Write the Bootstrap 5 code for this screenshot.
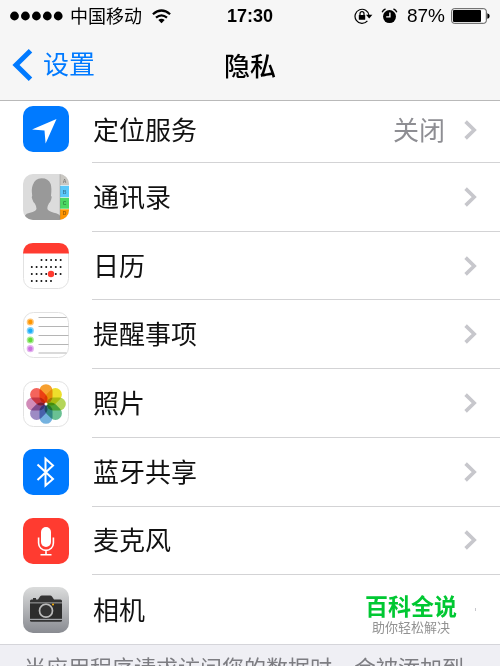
<!DOCTYPE html>
<html lang="zh-CN">
<head>
<meta charset="utf-8">
<meta name="viewport" content="width=device-width, initial-scale=1">
<title>隐私</title>
<link href="https://cdn.jsdelivr.net/npm/bootstrap@5.3.0/dist/css/bootstrap.min.css" rel="stylesheet">
<style>
body{font-family:"Liberation Sans","Noto Sans CJK SC",sans-serif;background:#efeff4;color:#111;overflow:hidden}
svg{display:block;flex:none}
.top-area{background:#f6f6f6;border-bottom:1px solid #b9b9b9}
.status{height:32px;padding:0 10px;color:#000}
.status-side{flex:1 1 0}
.carrier{font-size:18px;line-height:24px;padding-top:2px;margin-left:7px;margin-right:10px}
.clock{font-size:18px;line-height:24px}
.charge{font-size:19px;line-height:24px;margin:0 6px 0 9px}
.titlebar{height:68px;padding:2px 12px 0}
.back{font-size:26px;line-height:36px;color:#007aff;gap:9px}
.page-title{font-size:26px;line-height:36px;font-weight:500;color:#000}
.settings{background:#fff;border-bottom:1px solid #d5d5da}
.setting{min-height:68px;flex:1 1 0;padding-left:23px;color:#111;background:#fff}
.setting.first{flex:0 0 62px;min-height:62px}
.setting.first .tile{margin-bottom:7px}
.setting.first .setting-body{padding-bottom:4px}
.setting-body{margin-left:23px;padding-right:23px;border-bottom:1px solid #d3d3d5;font-size:26px;line-height:36px}
.setting-name{padding:2px 0 0 1px}
.state{color:#8e8e93;margin-right:19px;padding-top:2px}
.setting:last-child .setting-body{border-bottom:0}
.brand{line-height:24px;font-size:23px;color:#00c832;margin-right:18px;padding-top:12px}
.brand-sub{font-size:13px;line-height:18px;color:#929292}
.speck{width:1px;height:3px;background:#c7c7cc;margin-right:1px}
.note{height:21px;padding:8px 24px 0;font-size:22px;line-height:32px;color:#7d7d82}
</style>
<script src="https://cdn.jsdelivr.net/npm/bootstrap@5.3.0/dist/js/bootstrap.bundle.min.js"></script>
</head>
<body class="d-flex flex-column vh-100">
<svg width="0" height="0" class="position-absolute" aria-hidden="true">
  <symbol id="chev" viewBox="0 0 13 20"><path d="M1.6 1.6 10.2 10 1.6 18.4" fill="none" stroke="#c7c7cc" stroke-width="3.6"/></symbol>
</svg>
<header class="top-area">
  <div class="status d-flex align-items-center">
    <div class="status-side d-flex align-items-center">
      <svg width="53" height="10" viewBox="0 0 53 10"><g fill="#000"><circle cx="4.5" cy="5" r="4.4"/><circle cx="15.4" cy="5" r="4.4"/><circle cx="26.4" cy="5" r="4.4"/><circle cx="37.3" cy="5" r="4.4"/><circle cx="48.2" cy="5" r="4.4"/></g></svg>
      <span class="carrier">中国移动</span>
      <svg width="19" height="15" viewBox="0 0 19 15"><g fill="none" stroke="#000" stroke-width="2.2"><path d="M.9 5.3Q9.500-2.300 18.100 5.300"/><path d="M4 8.700Q9.500 4 15 8.700"/></g><path d="M6.300 11.100Q9.500 8.600 12.700 11.100L9.500 14.200Z"/></svg>
    </div>
    <span class="clock fw-bold">17:30</span>
    <div class="status-side d-flex align-items-center justify-content-end">
      <svg width="19" height="16" viewBox="0 0 19 16"><path d="M13.400 12.800A7 7 0 1 1 15 7.500" fill="none" stroke="#000" stroke-width="1.200"/><path d="M12 6.800h6.400L15.200 10.400Z"/><rect x="4.800" y="7" width="6.400" height="4.800" rx=".5"/><path d="M6 7.300V5.700a2 2 0 0 1 4 0v1.600" fill="none" stroke="#000" stroke-width="1.200"/></svg>
      <svg class="ms-2" width="17" height="16" viewBox="0 0 17 16"><circle cx="8.500" cy="8.600" r="6.500"/><path d="M8.900 4.500v4.400H5.200" fill="none" stroke="#f6f6f6" stroke-width="1.400"/><path d="M1.200 4.300Q2 1.800 4.500 1M15.800 4.300Q15 1.800 12.500 1" fill="none" stroke="#000" stroke-width="1.400"/></svg>
      <span class="charge">87%</span>
      <svg width="39" height="16" viewBox="0 0 39 16"><rect x=".7" y=".7" width="34.600" height="14.600" rx="2.500" fill="#fff" stroke="#555" stroke-width="1"/><rect x="2" y="2" width="28" height="12" rx="1"/><path d="M36.300 5.200q2.400.4 2.400 2.800t-2.400 2.800Z"/></svg>
    </div>
  </div>
  <nav class="titlebar d-flex align-items-center">
    <div class="status-side"><a href="#" class="back d-inline-flex align-items-center text-decoration-none"><svg width="22" height="32" viewBox="0 0 22 32"><path d="M18.500 1.800 4 16l14.500 14.200" fill="none" stroke="#007aff" stroke-width="5"/></svg>设置</a></div>
    <h1 class="page-title m-0">隐私</h1>
    <div class="status-side"></div>
  </nav>
</header>

<main class="settings d-flex flex-column flex-grow-1">
  <a href="#" class="setting first d-flex align-items-center text-decoration-none">
    <svg class="tile" width="46" height="46" viewBox="0 0 46 46"><rect width="46" height="46" rx="10" fill="#007aff"/><path d="M33.500 13 22.600 37.500 21.500 24.500 9 23.600Z" fill="#fff"/></svg>
    <div class="setting-body flex-grow-1 align-self-stretch d-flex align-items-center"><span class="setting-name me-auto">定位服务</span><span class="state">关闭</span><svg width="13" height="20"><use href="#chev"/></svg></div>
  </a>
  <a href="#" class="setting d-flex align-items-center text-decoration-none">
    <svg width="46" height="46" viewBox="0 0 46 46"><defs><clipPath id="tileClip"><rect width="46" height="46" rx="10"/></clipPath></defs><g clip-path="url(#tileClip)"><rect width="46" height="46" fill="#dcdcdc"/><path d="M2 46v-4.500q1-2 5-2.800 6.200-1.500 6.500-4 .2-2-1.700-5.200-1.500-1-2.300-3.800-1.400-3-.3-4-1-7 .5-10.500Q12 4.300 18.500 4.300q7 0 9.200 5.600 1.200 4 .3 11.800 1.400.8.200 3.800-.9 3-2.200 3.800-1.700 3-1.700 5 .2 3 6.500 4.400 5 1 6.200 3V46Z" fill="#999"/><path d="M37 0h9v11.500h-9Z" fill="#c9c7c2"/><path d="M37 11.500h9v12h-9Z" fill="#5ac8fa"/><path d="M37 23.500h9v11.500h-9Z" fill="#4cd964"/><path d="M37 35h9v11h-9Z" fill="#ff9500"/><path d="M37 11.500h9M37 23.500h9M37 35h9" stroke="#fff" stroke-opacity=".6"/><path d="M37 0v46" stroke="#777" stroke-opacity=".35"/><g fill="#000" fill-opacity=".4" font-family="Liberation Sans" font-size="5" font-weight="bold" text-anchor="middle"><text x="41.500" y="9">A</text><text x="41.500" y="19.500">B</text><text x="41.500" y="31">C</text><text x="41.500" y="41">D</text></g></g></svg>
    <div class="setting-body flex-grow-1 align-self-stretch d-flex align-items-center"><span class="setting-name me-auto">通讯录</span><svg width="13" height="20"><use href="#chev"/></svg></div>
  </a>
  <a href="#" class="setting d-flex align-items-center text-decoration-none">
    <svg width="46" height="46" viewBox="0 0 46 46"><rect x=".5" y=".5" width="45" height="45" rx="10" fill="#fff" stroke="#e2e2e2"/><path d="M0 10.500Q.5 0 10 0h26q9.500 0 10 10.500Z" fill="#ff3b30"/><g stroke="#111" stroke-width="2" stroke-linecap="round" stroke-dasharray="0 4.800"><path d="M18.500 17h19.500M8.800 24h29.300M8.800 31h29.300M8.800 38h19.500"/></g><circle cx="28" cy="31" r="3.200" fill="#ff3b30"/></svg>
    <div class="setting-body flex-grow-1 align-self-stretch d-flex align-items-center"><span class="setting-name me-auto">日历</span><svg width="13" height="20"><use href="#chev"/></svg></div>
  </a>
  <a href="#" class="setting d-flex align-items-center text-decoration-none">
    <svg width="46" height="46" viewBox="0 0 46 46"><rect x=".5" y=".5" width="45" height="45" rx="10" fill="#fff" stroke="#e2e2e2"/><path d="M15.500 5.500h28M15.500 14.500h30M15.500 23.500h30M15.500 32.500h30M15.500 41h28" stroke="#b5b5b5"/><g fill-opacity=".55"><circle cx="7.300" cy="10" r="3.600" fill="#ff9500"/><circle cx="7.300" cy="18.700" r="3.600" fill="#1badf8"/><circle cx="7.300" cy="28" r="3.600" fill="#63da38"/><circle cx="7.300" cy="36.700" r="3.600" fill="#cc73e1"/></g><circle cx="7.300" cy="10" r="2.200" fill="#ff9500"/><circle cx="7.300" cy="18.700" r="2.200" fill="#1badf8"/><circle cx="7.300" cy="28" r="2.200" fill="#63da38"/><circle cx="7.300" cy="36.700" r="2.200" fill="#cc73e1"/></svg>
    <div class="setting-body flex-grow-1 align-self-stretch d-flex align-items-center"><span class="setting-name me-auto">提醒事项</span><svg width="13" height="20"><use href="#chev"/></svg></div>
  </a>
  <a href="#" class="setting d-flex align-items-center text-decoration-none">
    <svg width="46" height="46" viewBox="0 0 46 46"><defs><rect id="petal" x="16.500" y="3.200" width="13" height="19.300" rx="6.500"/></defs><rect x=".5" y=".5" width="45" height="45" rx="10" fill="#fff" stroke="#e2e2e2"/><g style="mix-blend-mode:multiply"><use href="#petal" fill="#f7a030"/></g><g style="mix-blend-mode:multiply"><use href="#petal" fill="#eedf2c" transform="rotate(45 23 23)"/></g><g style="mix-blend-mode:multiply"><use href="#petal" fill="#b5d65a" transform="rotate(90 23 23)"/></g><g style="mix-blend-mode:multiply"><use href="#petal" fill="#6ac193" transform="rotate(135 23 23)"/></g><g style="mix-blend-mode:multiply"><use href="#petal" fill="#75b2df" transform="rotate(180 23 23)"/></g><g style="mix-blend-mode:multiply"><use href="#petal" fill="#9d8bc4" transform="rotate(225 23 23)"/></g><g style="mix-blend-mode:multiply"><use href="#petal" fill="#d18bb8" transform="rotate(270 23 23)"/></g><g style="mix-blend-mode:multiply"><use href="#petal" fill="#f4645c" transform="rotate(315 23 23)"/></g><circle cx="23" cy="23" r="1.500" fill="#fff"/></svg>
    <div class="setting-body flex-grow-1 align-self-stretch d-flex align-items-center"><span class="setting-name me-auto">照片</span><svg width="13" height="20"><use href="#chev"/></svg></div>
  </a>
  <a href="#" class="setting d-flex align-items-center text-decoration-none">
    <svg width="46" height="46" viewBox="0 0 46 46"><rect width="46" height="46" rx="10" fill="#007aff"/><path d="M14.500 15.500 30 30 22.500 36.500V9.800L30 16.500 14.500 31" fill="none" stroke="#fff" stroke-width="2"/></svg>
    <div class="setting-body flex-grow-1 align-self-stretch d-flex align-items-center"><span class="setting-name me-auto">蓝牙共享</span><svg width="13" height="20"><use href="#chev"/></svg></div>
  </a>
  <a href="#" class="setting d-flex align-items-center text-decoration-none">
    <svg width="46" height="46" viewBox="0 0 46 46"><rect width="46" height="46" rx="10" fill="#ff3b30"/><rect x="18" y="9" width="10" height="20" rx="5" fill="#fff"/><path d="M15.600 19.500v5.500a7.400 7.400 0 0 0 14.800 0v-5.500M23 32.500v4M17.500 36.800h11" fill="none" stroke="#fff" stroke-width="1.600"/></svg>
    <div class="setting-body flex-grow-1 align-self-stretch d-flex align-items-center"><span class="setting-name me-auto">麦克风</span><svg width="13" height="20"><use href="#chev"/></svg></div>
  </a>
  <a href="#" class="setting d-flex align-items-center text-decoration-none">
    <svg width="46" height="46" viewBox="0 0 46 46"><defs><linearGradient id="steel" x2="0" y2="1"><stop stop-color="#dbdcdc"/><stop offset="1" stop-color="#898b91"/></linearGradient></defs><rect width="46" height="46" rx="10" fill="url(#steel)"/><path d="M7 14q0-1.500 1.500-1.500H15l2-3Q17.600 8.500 19 8.500h8q1.400 0 2 1l2 3h6.500q1.500 0 1.500 1.500v1.500H7ZM10 11h3v1.500h-3Z" fill="#333"/><path d="M7 16.300h32v15.500H7Z" fill="#2c2c2c"/><path d="M7 33h32v.5q0 1.300-1.500 1.300h-29Q7 34.800 7 33.500Z" fill="#333"/><circle cx="23" cy="23.700" r="7.600" fill="#2c2c2c"/><circle cx="23" cy="23.700" r="6.500" fill="#333" stroke="#bbb" stroke-width="1.700"/><circle cx="30" cy="17.600" r="1" fill="#ffb000"/></svg>
    <div class="setting-body flex-grow-1 align-self-stretch d-flex align-items-center"><span class="setting-name me-auto">相机</span><span class="brand d-flex flex-column align-items-center"><strong>百科全说</strong><span class="brand-sub">助你轻松解决</span></span><span class="speck"></span></div>
  </a>
</main>
<footer class="note overflow-hidden text-nowrap">当应用程序请求访问您的数据时，会被添加到</footer>
</body>
</html>
